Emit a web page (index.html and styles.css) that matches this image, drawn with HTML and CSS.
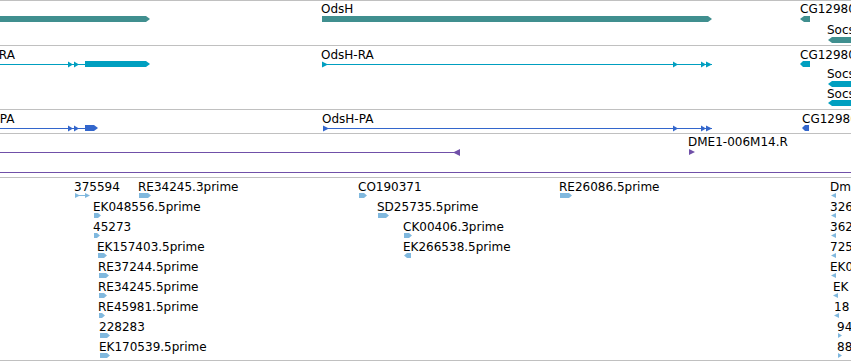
FILE: index.html
```html
<!DOCTYPE html>
<html lang="en">
<head>
    <meta charset="UTF-8">
    <title>Track View</title>
    <link rel="stylesheet" href="styles.css">
</head>
<body>
    <div class="browser">
        <!-- Genes -->
        <div class="track">
            <svg class="canvas" width="851" height="44" viewBox="0 1 851 44">
                <polygon class="gene" points="0,16 146,16 150,19 146,22 0,22"/>
                <text class="label" x="321" y="13">OdsH</text>
                <polygon class="gene" points="322,16 708,16 712,19 708,22 322,22"/>
                <text class="label" x="800" y="13">CG12980</text>
                <polygon class="gene" points="800,19 804,16 810,16 810,22 804,22"/>
                <text class="label" x="827" y="34">Socs36E</text>
                <polygon class="gene" points="828,40 832,37 860,37 860,43 832,43"/>
            </svg>
        </div>
        <!-- Transcripts -->
        <div class="track">
            <svg class="canvas" width="851" height="63" viewBox="0 46 851 63">
                <text class="label" x="-1.2" y="59">RA</text>
                <line class="tx-line" x1="0" y1="64.5" x2="85" y2="64.5"/>
                <polygon class="tx" points="68,61.5 73,64.5 68,67.5"/>
                <polygon class="tx" points="74,61.5 79,64.5 74,67.5"/>
                <polygon class="tx" points="85,61 146,61 150,64 146,67 85,67"/>

                <text class="label" x="321" y="59">OdsH-RA</text>
                <line class="tx-line" x1="322" y1="64.5" x2="712" y2="64.5"/>
                <polygon class="tx" points="322,61.5 328,64.5 322,67.5"/>
                <polygon class="tx" points="673,61.5 678,64.5 673,67.5"/>
                <polygon class="tx" points="701,61.5 706,64.5 701,67.5"/>
                <polygon class="tx" points="706,61.5 712,64.5 706,67.5"/>

                <text class="label" x="800" y="59">CG12980-RA</text>
                <polygon class="tx" points="800,64 803,61 810,61 810,67 803,67"/>
                <text class="label" x="827" y="78">Socs36E-RA</text>
                <polygon class="tx" points="828,84 832,81 860,81 860,87 832,87"/>
                <text class="label" x="827" y="98">Socs36E-RB</text>
                <polygon class="tx" points="828,103 832,100 860,100 860,106 832,106"/>
            </svg>
        </div>
        <!-- Proteins -->
        <div class="track">
            <svg class="canvas" width="851" height="23" viewBox="0 110 851 23">
                <text class="label" x="-0.2" y="123">PA</text>
                <line class="pr-line" x1="0" y1="128.5" x2="85" y2="128.5"/>
                <polygon class="pr" points="68,125.5 73,128.5 68,131.5"/>
                <polygon class="pr" points="74,125.5 79,128.5 74,131.5"/>
                <polygon class="pr" points="85,125 94,125 98,128 94,131 85,131"/>

                <text class="label" x="322" y="123">OdsH-PA</text>
                <line class="pr-line" x1="323" y1="128.5" x2="712" y2="128.5"/>
                <polygon class="pr" points="323,125.5 329,128.5 323,131.5"/>
                <polygon class="pr" points="673,125.5 678,128.5 673,131.5"/>
                <polygon class="pr" points="701,125.5 706,128.5 701,131.5"/>
                <polygon class="pr" points="706,125.5 712,128.5 706,131.5"/>

                <text class="label" x="802" y="123">CG12980-PA</text>
                <polygon class="pr" points="802,128 805,125 809,125 809,131 805,131"/>
            </svg>
        </div>
        <!-- Clones -->
        <div class="track">
            <svg class="canvas" width="851" height="43" viewBox="0 134 851 43">
                <line class="cl-line" x1="0" y1="152.5" x2="459" y2="152.5"/>
                <polygon class="cl" points="460,149 460,156 453,152.5"/>
                <text class="label" x="688" y="146">DME1-006M14.R</text>
                <polygon class="cl" points="689,149 695,152 689,155"/>
                <line class="cl-line" x1="0" y1="172.5" x2="851" y2="172.5"/>
            </svg>
        </div>
        <!-- ESTs -->
        <div class="track">
            <svg class="canvas" width="851" height="182" viewBox="0 178 851 182">
                <text class="label" x="74" y="191">375594</text>
                <line class="est-line" x1="75" y1="195.5" x2="88" y2="195.5"/>
                <polygon class="est" points="75,193 80,195.5 75,198"/>
                <polygon class="est" points="85,193 90,195.5 85,198"/>
                <text class="label" x="138" y="191">RE34245.3prime</text>
                <polygon class="est" points="139,193 148,193 151,195.5 148,198 139,198"/>
                <text class="label" x="358" y="191">CO190371</text>
                <polygon class="est" points="359,193 364,193 367,195.5 364,198 359,198"/>
                <text class="label" x="559" y="191">RE26086.5prime</text>
                <polygon class="est" points="560,193 569,193 572,195.5 569,198 560,198"/>
                <text class="label" x="830" y="191">Dm</text>
                <polygon class="est" points="831,195.5 836,193 836,198"/>

                <text class="label" x="93" y="211">EK048556.5prime</text>
                <polygon class="est" points="94,213 98,213 101,215.5 98,218 94,218"/>
                <text class="label" x="377" y="211">SD25735.5prime</text>
                <polygon class="est" points="378,213 386,213 389,215.5 386,218 378,218"/>
                <text class="label" x="830" y="211">326641</text>
                <polygon class="est" points="831,215.5 836,213 836,218"/>

                <text class="label" x="93" y="231">45273</text>
                <polygon class="est" points="94,233 97,233 100,235.5 97,238 94,238"/>
                <text class="label" x="403" y="231">CK00406.3prime</text>
                <polygon class="est" points="404,233 409,233 412,235.5 409,238 404,238"/>
                <text class="label" x="830" y="231">362284</text>
                <polygon class="est" points="831,235.5 836,233 836,238"/>

                <text class="label" x="97" y="251">EK157403.5prime</text>
                <polygon class="est" points="98,253 104,253 107,255.5 104,258 98,258"/>
                <text class="label" x="403" y="251">EK266538.5prime</text>
                <polygon class="est" points="404,255.5 407,253 411,253 411,258 407,258"/>
                <text class="label" x="830" y="251">725501</text>
                <polygon class="est" points="831,255.5 836,253 836,258"/>

                <text class="label" x="98" y="271">RE37244.5prime</text>
                <polygon class="est" points="99,273 106,273 109,275.5 106,278 99,278"/>
                <text class="label" x="830" y="271">EK0</text>
                <polygon class="est" points="831,275.5 836,273 836,278"/>

                <text class="label" x="98" y="291">RE34245.5prime</text>
                <polygon class="est" points="99,293 104,293 107,295.5 104,298 99,298"/>
                <text class="label" x="833" y="291">EK</text>
                <polygon class="est" points="833,295.5 838,293 838,298"/>

                <text class="label" x="98" y="311">RE45981.5prime</text>
                <polygon class="est" points="99,313 102,313 105,315.5 102,318 99,318"/>
                <text class="label" x="834" y="311">18</text>
                <polygon class="est" points="834,315.5 839,313 839,318"/>

                <text class="label" x="99" y="331">228283</text>
                <polygon class="est" points="100,333 107,333 110,335.5 107,338 100,338"/>
                <text class="label" x="837" y="331">94</text>
                <polygon class="est" points="838,333 842,335.5 838,338"/>

                <text class="label" x="99" y="351">EK170539.5prime</text>
                <polygon class="est" points="100,353 107,353 110,355.5 107,358 100,358"/>
                <text class="label" x="837" y="351">88</text>
                <polygon class="est" points="838,353 842,355.5 838,358"/>
            </svg>
        </div>
    </div>
</body>
</html>
```

FILE: styles.css
```css
body {
    margin: 0;
    background: #fff;
    overflow: hidden;
}
.browser {
    width: 851px;
    border-top: 1px solid #c0c0c0;
}
.track {
    border-bottom: 1px solid #c0c0c0;
}
.canvas {
    display: block;
}
.label {
    font-family: "DejaVu Sans", sans-serif;
    font-size: 12px;
    fill: #000;
}
.gene {
    fill: #408f8f;
}
.tx {
    fill: #009fc0;
}
.tx-line {
    stroke: #009fc0;
    stroke-width: 1;
}
.pr {
    fill: #3366cc;
}
.pr-line {
    stroke: #3366cc;
    stroke-width: 1;
}
.cl {
    fill: #7050a8;
}
.cl-line {
    stroke: #7050a8;
    stroke-width: 1.2;
}
.est {
    fill: #80b8de;
}
.est-line {
    stroke: #80b8de;
    stroke-width: 1;
}
```
